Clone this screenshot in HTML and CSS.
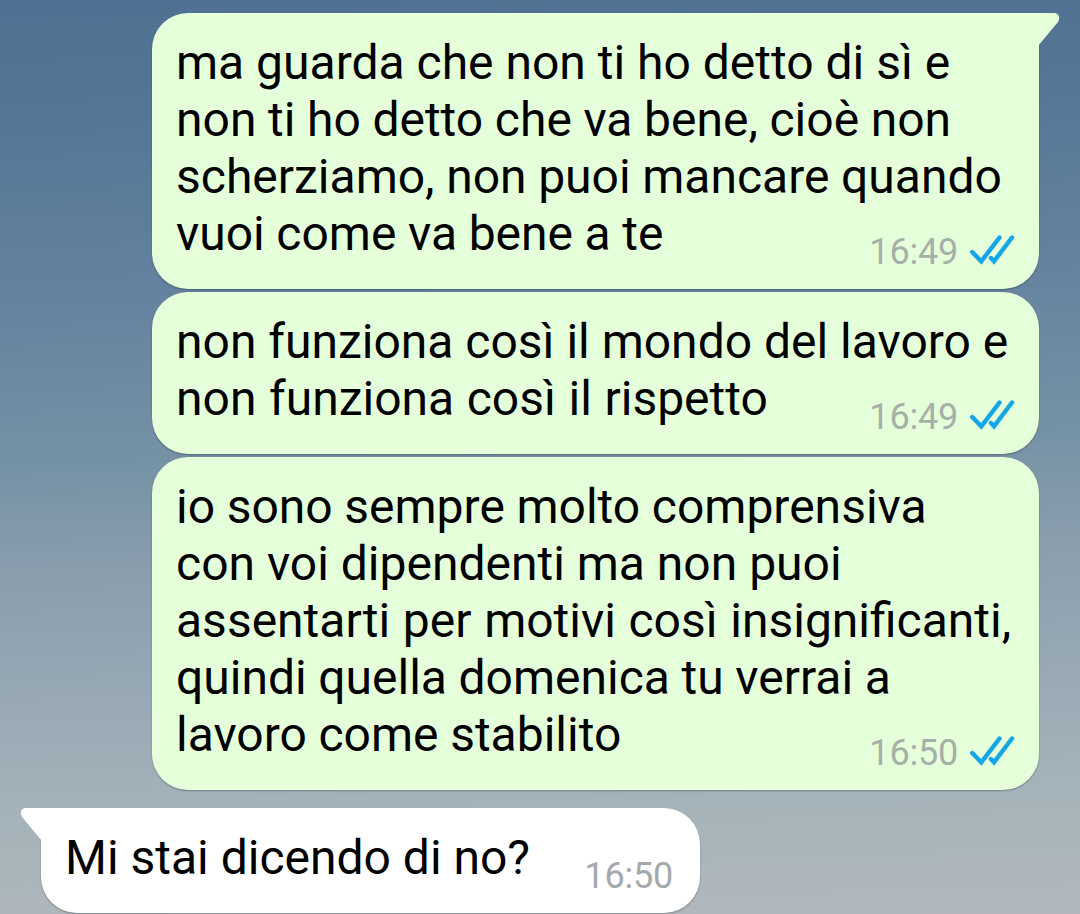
FILE: index.html
```
<!DOCTYPE html>
<html lang="it">
<head>
    <meta charset="UTF-8">
    <title>Chat</title>
    <link rel="stylesheet" href="styles.css">
</head>
<body>
<svg class="defs" width="0" height="0">
    <symbol id="ticks" viewBox="0 0 46 30">
        <path d="M3.2 17 L12.3 26.3 L30.5 2.5 M22 23 L25 26.3 L43 2.5"/>
    </symbol>
</svg>
<main class="chat">
    <div class="message out first">
        <svg class="tail" width="22" height="34" viewBox="0 0 22 34"><path d="M0 0 H16 C21 0 22.5 5 20 9 L0 33 Z"/></svg>
        <p class="text">ma guarda che non ti ho detto di sì e<br><span class="tight">non ti ho detto che va bene, cioè non<br>scherziamo, non puoi mancare quando<br>vuoi come va bene a te</span></p>
        <div class="meta"><span>16:49</span><svg class="ticks"><use href="#ticks"/></svg></div>
    </div>
    <div class="message out">
        <p class="text">non funziona così il mondo del lavoro e<br><span class="loose">non funziona così il rispetto</span></p>
        <div class="meta"><span>16:49</span><svg class="ticks"><use href="#ticks"/></svg></div>
    </div>
    <div class="message out">
        <p class="text"><span class="tight">io sono sempre molto comprensiva</span><br>con voi dipendenti ma non puoi<br><span class="loose">assentarti per motivi così insignificanti,</span><br><span class="tight">quindi quella domenica tu verrai a<br>lavoro come stabilito</span></p>
        <div class="meta"><span>16:50</span><svg class="ticks"><use href="#ticks"/></svg></div>
    </div>
    <div class="message in first">
        <svg class="tail" width="22" height="34" viewBox="0 0 22 34"><path d="M22 0 H6 C1 0 -0.5 5 2 9 L22 33 Z"/></svg>
        <p class="text">Mi stai dicendo di no?</p>
        <div class="meta"><span>16:50</span></div>
    </div>
</main>
</body>
</html>
```
FILE: styles.css
```
* {
    box-sizing: border-box;
}
body {
    margin: 0;
    height: 914px;
    overflow: hidden;
    font-family: Roboto, sans-serif;
    background: linear-gradient(178deg, #4f7092 0%, #557795 13%, #64829f 31%, #7592a5 49%, #8b9eae 61%, #9aabb6 76%, #a5b4ba 87%, #b2b8bd 100%);
}
.defs {
    position: absolute;
}
.chat {
    display: flex;
    flex-direction: column;
    gap: 3px;
    padding: 13px 41px 0;
}
.message {
    position: relative;
    padding: 21px 24px 27px;
    border-radius: 36px;
    box-shadow: 0 1px 2px rgba(0, 0, 0, 0.3);
}
.out {
    width: 887px;
    align-self: flex-end;
    background: #e5ffdb;
}
.in {
    width: 659px;
    margin-top: 15px;
    background: #fff;
}
.out.first {
    border-top-right-radius: 0;
}
.in.first {
    border-top-left-radius: 0;
}
.text {
    margin: 0;
    font-size: 48px;
    line-height: 57px;
    white-space: nowrap;
    color: #000;
}
.tight {
    word-spacing: -0.3px;
}
.loose {
    word-spacing: 0.7px;
}
.meta {
    position: absolute;
    right: 24px;
    bottom: 16px;
    display: flex;
    align-items: center;
    gap: 11px;
    font-size: 36px;
    line-height: 42px;
    letter-spacing: -0.2px;
    color: #a5b0a8;
}
.in .meta {
    right: 27px;
    color: #a5a9ac;
}
.ticks {
    width: 46px;
    height: 30px;
    margin-top: -5px;
    fill: none;
    stroke: #14a6e6;
    stroke-width: 4.4;
    stroke-linecap: round;
}
.tail {
    position: absolute;
    top: 0;
}
.out .tail {
    right: -21px;
    fill: #e5ffdb;
}
.in .tail {
    left: -21px;
    fill: #fff;
}
```
